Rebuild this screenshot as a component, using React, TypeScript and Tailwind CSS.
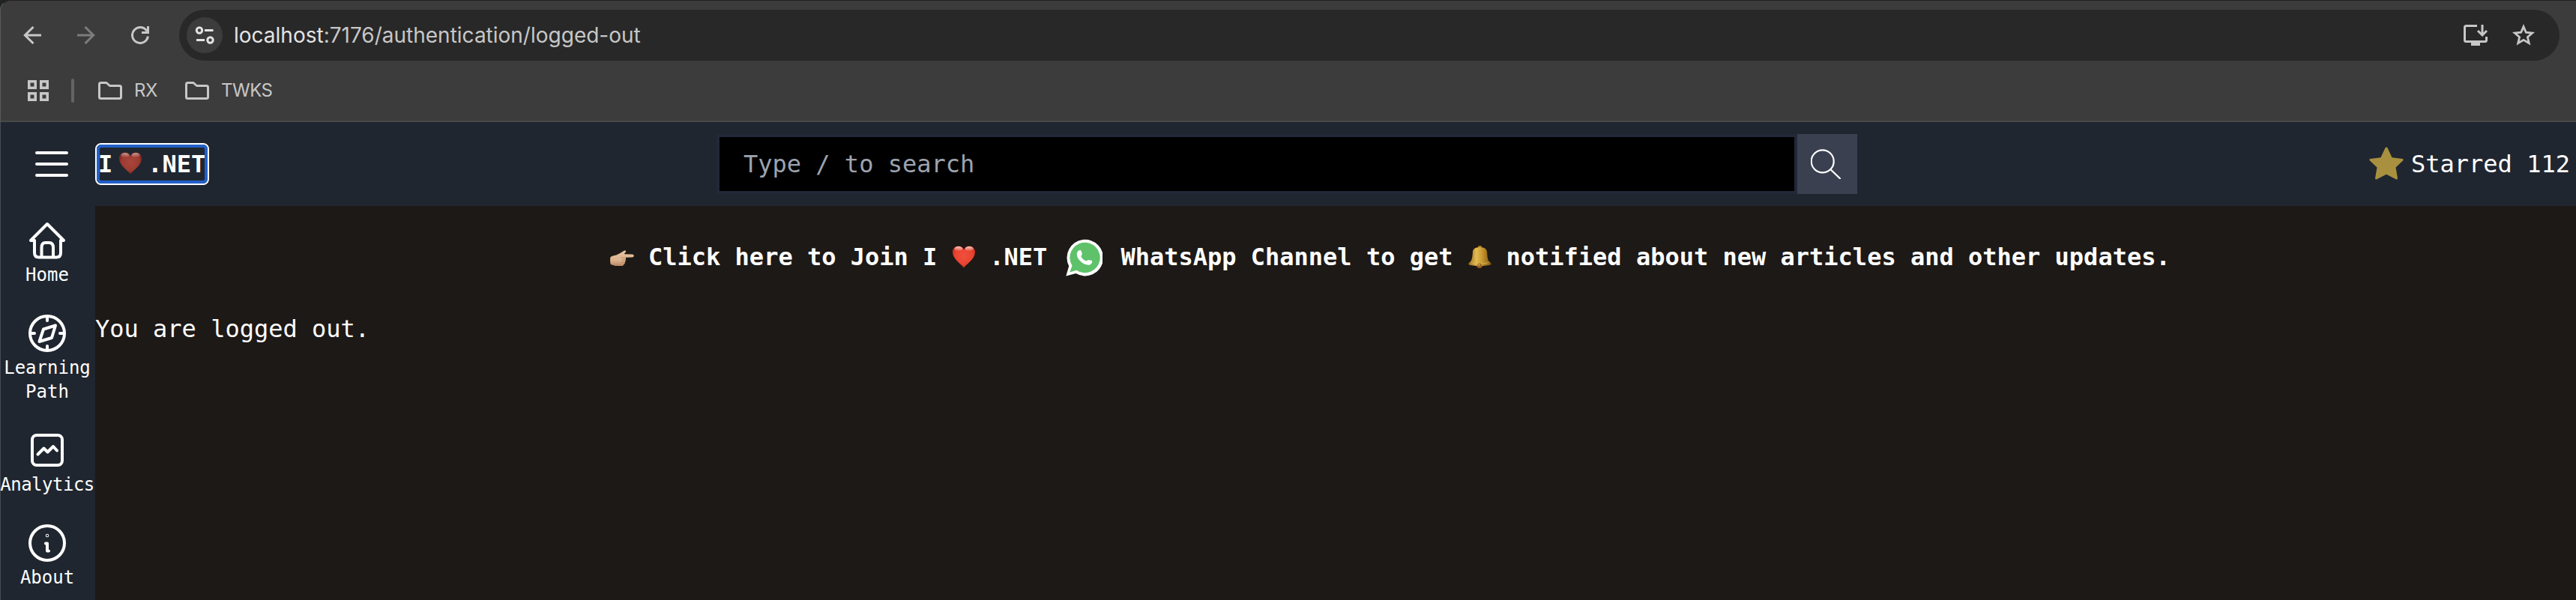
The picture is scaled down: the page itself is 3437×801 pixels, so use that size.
import type { ReactNode } from 'react';

function Heart({ dim = false, className = '' }: { dim?: boolean; className?: string }) {
  const id = dim ? 'heart-dim' : 'heart-bright';
  return (
    <svg className={`block h-[30px] w-[30px] shrink-0 ${className}`} viewBox="0 0 30 30">
      <defs>
        <radialGradient id={id} cx="50%" cy="45%" r="60%">
          <stop offset="0" stopColor={dim ? '#a8453c' : '#f1503f'} />
          <stop offset="0.65" stopColor={dim ? '#9e3b31' : '#e8432f'} />
          <stop offset="1" stopColor={dim ? '#6f1d17' : '#c52a1b'} />
        </radialGradient>
        <linearGradient id={`${id}-shine`} x1="0" y1="0" x2="0" y2="1">
          <stop offset="0" stopColor="#fff" stopOpacity={dim ? 0.5 : 0.75} />
          <stop offset="1" stopColor="#fff" stopOpacity="0" />
        </linearGradient>
      </defs>
      <path d="M15 29.5C12.5 25 0 18.500 0 8.500C0 4 3.300.5 7.600.5C11 .5 13.800 2.300 15 5.500C16.200 2.300 19 .5 22.400.5C26.700.5 30 4 30 8.500C30 18.500 17.500 25 15 29.500Z" fill={`url(#${id})`} />
      <ellipse cx="7.800" cy="4.300" rx="5.400" ry="3.200" fill={`url(#${id}-shine)`} />
      <ellipse cx="22.200" cy="4.300" rx="5.400" ry="3.200" fill={`url(#${id}-shine)`} />
    </svg>
  );
}

function Hand() {
  return (
    <svg className="ml-[687px] mt-[3px] block h-[22px] w-8 shrink-0" viewBox="0 0 32 22">
      <defs>
        <linearGradient id="skin" x1="0" y1="0" x2="0" y2="1">
          <stop offset="0" stopColor="#e6c4a0" />
          <stop offset="0.65" stopColor="#dcb48e" />
          <stop offset="1" stopColor="#b98560" />
        </linearGradient>
      </defs>
      <path d="M.3 10C.6 8.500 2 8 4 7.500L9 6.200C12 5 15.500 3 18.500.8C20.500-.4 21.800 1.200 20.800 2.600C20 3.800 19.200 4.600 18.800 5.300L29.500 5.500C32.500 5.800 32.500 9.200 29.500 9.400L20.600 9.800C21.300 11 21.200 12 20.500 12.800C21 14.300 20.600 15.300 19.700 15.900C20 17.800 19.300 18.600 18.300 19C18 20.800 16.500 21 14.500 21L8 21C5 20.800 3.500 19.500 1 19.300C0 17 0 13 .3 10Z" fill="url(#skin)" />
      <path d="M20.400 9.900L14.500 10.200M20.400 12.800L15.500 13.200M19.500 16L15 16.300" stroke="#b08058" strokeWidth=".8" fill="none" />
    </svg>
  );
}

function Bell() {
  return (
    <svg className="ml-[21px] block h-[30px] w-[31px] shrink-0" viewBox="0 0 31 30">
      <defs>
        <linearGradient id="gold" x1="0" y1="0" x2="1" y2="0">
          <stop offset="0" stopColor="#94681c" />
          <stop offset="0.35" stopColor="#e3bd52" />
          <stop offset="0.6" stopColor="#c9982f" />
          <stop offset="1" stopColor="#7c5414" />
        </linearGradient>
      </defs>
      <rect x="13" y="0" width="5" height="4" rx="1.500" fill="#a5791f" />
      <circle cx="15" cy="26" r="4" fill="#8a5a1c" />
      <path d="M6 8C6.500 4 10 2 15.500 2S24.500 4 25 8C25.500 13 25.500 17.500 27 20C28.500 22 30.500 22.800 30.700 24.500C30.500 26 24 27 15.500 27S.3 26 .2 24.500C.4 22.800 3 22 4 19.500C5.500 16.500 5.700 13 6 8Z" fill="url(#gold)" />
      <path d="M3.500 22.500C10 24.300 21 24.300 27.500 22.500" stroke="#e3bd52" strokeWidth="1" strokeOpacity=".7" fill="none" />
      <circle cx="15" cy="26.500" r="3" fill="#9a6324" />
      <circle cx="14.500" cy="25.800" r="1.200" fill="#d9a450" />
    </svg>
  );
}

function WhatsApp() {
  return (
    <svg className="ml-[25px] mt-px block h-[50px] w-[49px] shrink-0" viewBox="0 0 49 50">
      <path d="M.3 49.500L4.200 36.300A24.300 24.300 0 1 1 13.500 46.100Z" fill="#fff" />
      <path d="M5.300 44.600L8.500 35.800A20.200 20.200 0 1 1 14.200 41.700Z" fill="#5fc26b" />
      <path d="M15.500 17.500C16.300 15.800 17.300 15 19 15C20 15 20.400 15.400 20.800 16.500L21.800 19.500C22.200 21 20.200 22.300 20.500 23.500C21.700 26 24 28.300 26.700 29.300C28 29.600 29 28.200 30.200 28.100L34 28.700C35 29 35.300 29.600 35.200 30.600C35 33 33.300 34.400 31 34.700C24 35.500 15 27.500 14.800 20.800C14.800 19.500 15 18.500 15.500 17.500Z" fill="#fff" />
    </svg>
  );
}

function NavItem({ label, children }: { label: string; children: ReactNode }) {
  return (
    <a className="flex w-full flex-col items-center text-center text-[24px] leading-8">
      <span className="flex h-[60px] items-center">
        <svg className="block size-[60px]" viewBox="0 0 60 60" fill="none" stroke="#fff" strokeWidth="4" strokeLinecap="round" strokeLinejoin="round">
          {children}
        </svg>
      </span>
      <span className={label.length === 9 ? 'tracking-[-0.5px]' : 'px-1'}>{label}</span>
    </a>
  );
}

function Folder() {
  return (
    <svg className="block h-6 w-8 shrink-0" viewBox="0 0 32 24" fill="none" stroke="#c7c7c7" strokeWidth="3" strokeLinejoin="round">
      <path d="M3.500 1.500H11L15.500 5.500H28.500Q30.500 5.500 30.500 7.500V20.500Q30.500 22.500 28.500 22.500H3.500Q1.500 22.500 1.500 20.500V3.500Q1.500 1.500 3.500 1.500Z" />
    </svg>
  );
}

function BrowserBar() {
  return (
    <div className="h-[163px] bg-[#1f2321]">
      <div className="flex h-full flex-col rounded-tl-[14px] border-b-2 border-l border-t border-b-[#464946] border-l-[#5b5b5b] border-t-[#222] bg-[#3c3c3c] pt-3 font-['Inter',sans-serif]">
        <div className="flex h-[68px] items-center pl-[30px] pr-[22px]">
          <svg className="block size-6 shrink-0" viewBox="0 0 24 24" fill="none" stroke="#c7c7c7" strokeWidth="3">
            <path d="M24 12H2M13.500 1L2.300 12L13.500 23" />
          </svg>
          <svg className="ml-12 block size-6 shrink-0" viewBox="0 0 24 24" fill="none" stroke="#7c7c7c" strokeWidth="3">
            <path d="M0 12H22M10.500 1L21.700 12L10.500 23" />
          </svg>
          <svg className="ml-12 block size-6 shrink-0" viewBox="0 0 24 24" fill="none" stroke="#c7c7c7" strokeWidth="3">
            <path d="M22.400 13.500A10.500 10.500 0 1 1 21 6.500" />
            <path d="M22.500 0V8.500H14" />
          </svg>
          <div className="ml-10 flex h-[68px] flex-1 items-center rounded-full bg-[#282828] pl-2.5 pr-8">
            <span className="flex size-12 shrink-0 items-center justify-center rounded-full bg-[#3c3c3c]">
              <svg className="block h-6 w-[26px]" viewBox="0 0 26 24" fill="none" stroke="#e3e3e3" strokeWidth="3">
                <circle cx="6" cy="5.500" r="3.700" />
                <path d="M13 5.500H24.500M2 18.500H13" />
                <circle cx="20.500" cy="18.500" r="3.700" />
              </svg>
            </span>
            <span className="ml-[15px] text-[28px] leading-9 text-[#c7c7c7]">
              <span className="text-[#e3e3e3]">localhost</span>:7176/authentication/logged-out
            </span>
            <svg className="ml-auto block h-7 w-8 shrink-0" viewBox="0 0 32 28" fill="none" stroke="#c7c7c7" strokeWidth="3">
              <path d="M18 1.500H3.500Q1.500 1.500 1.500 3.500V20.500Q1.500 22.500 3.500 22.500H28.500Q30.500 22.500 30.500 20.500V16M25 0V14M19 8L25 14L31 8" />
              <path d="M10 23H22V28H10Z" fill="#c7c7c7" stroke="none" />
            </svg>
            <svg className="ml-8 block h-[30px] w-8 shrink-0" viewBox="0 0 32 30" fill="none" stroke="#c7c7c7" strokeWidth="2.800">
              <path d="M16 3.600L19.300 11.200L27.700 12L21.400 17.500L23.300 25.700L16 21.400L8.700 25.700L10.600 17.500L4.300 12L12.700 11.200Z" />
            </svg>
          </div>
        </div>
        <div className="flex h-20 items-center pl-9 text-[24px] text-[#c7c7c7]">
          <svg className="block size-7 shrink-0" viewBox="0 0 28 28" fill="none" stroke="#c7c7c7" strokeWidth="3.500">
            <path d="M1.750 1.750H10.250V10.250H1.750ZM17.750 1.750H26.250V10.250H17.750ZM1.750 17.750H10.250V26.250H1.750ZM17.750 17.750H26.250V26.250H17.750Z" />
          </svg>
          <span className="ml-[30px] h-8 w-1 rounded-sm bg-[#646464]" />
          <span className="ml-8 flex items-center">
            <Folder />
            <span className="ml-4 w-8 tracking-[-0.4px]">RX</span>
          </span>
          <span className="ml-9 flex items-center">
            <Folder />
            <span className="ml-4 tracking-[-0.5px]">TWKS</span>
          </span>
        </div>
      </div>
    </div>
  );
}

export default function App() {
  return (
    <div className="flex h-[801px] w-[3437px] flex-col overflow-hidden bg-[#1d1916] font-['DejaVu_Sans_Mono',monospace] text-[32px] leading-[48px] text-white">
      <BrowserBar />
      <header className="flex h-28 shrink-0 items-center border-l border-[#484d54] bg-[#202630]">
        <svg className="ml-[46px] block h-[34px] w-11 shrink-0" viewBox="0 0 44 34" stroke="#fff" strokeWidth="4" strokeLinecap="round">
          <path d="M2 2H42M2 17H42M2 32H42" />
        </svg>
        <a className="ml-9 flex h-14 w-[152px] shrink-0 rounded-[8px] border-2 border-white font-bold">
          <span className="flex w-full items-center overflow-hidden rounded-[6px] border-4 border-[#2260c8]">
            <span className="-ml-[2px]">I</span>
            <Heart dim className="ml-[9px] mr-[8px] -mt-[2px]" />
            <span className="shrink-0">.NET</span>
          </span>
        </a>
        <div className="ml-[677px] flex h-20 shrink-0">
          <div className="flex w-[1442px] items-center border-4 border-[#222838] bg-black pl-8 text-[#9ca3af]">Type / to search</div>
          <button className="flex w-20 items-center justify-center bg-[#3b4050] pr-1">
            <svg className="block size-10" viewBox="0 0 40 40" fill="none" stroke="#fff" strokeWidth="2.200" strokeLinecap="round">
              <circle cx="15.700" cy="16.400" r="15" />
              <path d="M26.500 27.200L39 39.300" />
            </svg>
          </button>
        </div>
        <svg className="ml-[683px] -mt-[3px] block h-11 w-[46px] shrink-0" viewBox="0 0 46 44" fill="#a8903f">
          <path d="M21.300 1.800Q23 -.8 24.700 1.800L30.500 14.300L44.500 16Q46.500 16.900 45 18.600L35.500 27.500L38 42Q37.700 44.300 35.700 43.300L23 36.800L10.300 43.300Q8.300 44.300 8 42L10.500 27.500L1 18.600Q-.5 16.900 1.500 16L15.500 14.300Z" />
        </svg>
        <span className="ml-2.5 whitespace-pre">Starred 112</span>
      </header>
      <div className="flex min-h-0 flex-1">
        <nav className="flex w-[127px] shrink-0 flex-col items-center gap-8 border-l border-[#484d54] bg-[#202630] pr-0.5 pt-4">
          <NavItem label="Home">
            <path d="M30 8L8 30H13V46.500Q13 52.500 19 52.500H42Q48 52.500 48 46.500V30H52Z" />
            <path d="M22.500 52V39.500Q22.500 33 27.500 33H32.500Q38 33 38 39.500V52" />
          </NavItem>
          <NavItem label="Learning Path">
            <circle cx="30" cy="30" r="23" />
            <path d="M30 8V13M30 47V52M8 30H13M47 30H52M41 19.500L25 24.500L19.500 41L36 36Z" />
          </NavItem>
          <NavItem label="Analytics">
            <rect x="10" y="10" width="40" height="40" rx="6" />
            <path d="M17.500 35.500L25.500 27.500L30.500 32.500L38 25L43 30.500" />
          </NavItem>
          <NavItem label="About">
            <circle cx="30" cy="30" r="23" />
            <path d="M28 30.500H30V40.500H32" />
            <circle cx="30" cy="20" r="0.500" strokeWidth="3.500" />
          </NavItem>
        </nav>
        <main className="flex flex-1 flex-col pt-11">
          <a className="flex h-12 items-center whitespace-pre font-bold">
            <Hand />
            <span className="ml-[19px]">Click here to Join I</span>
            <Heart className="ml-[21px]" />
            <span className="ml-[19px]">.NET</span>
            <WhatsApp />
            <span className="ml-6">WhatsApp Channel to get</span>
            <Bell />
            <span className="ml-[19px]">notified about new articles and other updates.</span>
          </a>
          <p className="mt-12">You are logged out.</p>
        </main>
      </div>
    </div>
  );
}
